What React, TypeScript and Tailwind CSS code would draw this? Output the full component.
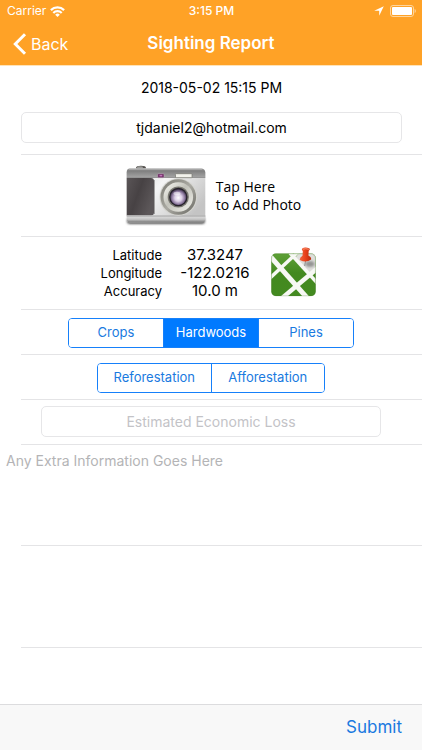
import { useState } from 'react'
import { clsx } from 'clsx'

interface SegmentedProps {
  label: string
  options: string[]
  value: string | null
  onChange: (value: string) => void
  className?: string
}

function Segmented({ label, options, value, onChange, className }: SegmentedProps) {
  return (
    <div
      role="group"
      aria-label={label}
      className={clsx(
        'mx-auto flex h-[30px] divide-x divide-[#1680fa] overflow-hidden rounded border border-[#1680fa]',
        className
      )}
    >
      {options.map((option) => (
        <button
          key={option}
          type="button"
          aria-pressed={value === option}
          onClick={() => onChange(option)}
          className={clsx(
            'flex-1 text-[13px]',
            value === option ? 'bg-[#007aff] text-white' : 'bg-white text-[#1a7ae0]'
          )}
        >
          {option}
        </button>
      ))}
    </div>
  )
}

function WifiIcon() {
  return (
    <svg width="15" height="11" viewBox="0 0 15 11" fill="none" stroke="white" strokeWidth="2.2" aria-hidden="true">
      <path d="M0.9 4.1a9.4 9.4 0 0 1 13.2 0" />
      <path d="M3.3 6.9a5.9 5.9 0 0 1 8.4 0" />
      <path d="M7.5 11 5.2 8.7a3.3 3.3 0 0 1 4.6 0z" fill="white" stroke="none" />
    </svg>
  )
}

function BatteryIcon() {
  return (
    <svg width="26" height="12" viewBox="0 0 26 12" aria-hidden="true">
      <rect x="0.5" y="0.5" width="23" height="11" rx="2.5" fill="none" stroke="#ffd59c" />
      <rect x="2" y="2" width="20" height="8" rx="1" fill="white" />
      <path d="M24.6 4v4c1.6-.6 1.6-3.4 0-4z" fill="#ffd59c" />
    </svg>
  )
}

function CameraIcon() {
  return (
    <svg width="84" height="62" viewBox="0 0 84 62" aria-hidden="true">
      <defs>
        <linearGradient id="cam-top" x1="0" y1="0" x2="0" y2="1">
          <stop offset="0" stopColor="#a5a5a5" />
          <stop offset="0.25" stopColor="#7f7f7f" />
          <stop offset="0.9" stopColor="#a2a2a2" />
          <stop offset="1" stopColor="#858585" />
        </linearGradient>
        <linearGradient id="cam-body" x1="0" y1="0" x2="1" y2="0.6">
          <stop offset="0" stopColor="#d2d2d2" />
          <stop offset="0.45" stopColor="#f5f5f5" />
          <stop offset="1" stopColor="#c4c4c4" />
        </linearGradient>
        <linearGradient id="cam-grip" x1="0" y1="0" x2="1" y2="0.5">
          <stop offset="0" stopColor="#5a5557" />
          <stop offset="0.5" stopColor="#474244" />
          <stop offset="1" stopColor="#5c5759" />
        </linearGradient>
        <linearGradient id="cam-base" x1="0" y1="0" x2="0" y2="1">
          <stop offset="0" stopColor="#e4e4e4" />
          <stop offset="0.55" stopColor="#c4c4c4" />
          <stop offset="1" stopColor="#777" />
        </linearGradient>
        <linearGradient id="cam-ring" x1="0" y1="0" x2="1" y2="1">
          <stop offset="0" stopColor="#77776f" />
          <stop offset="0.5" stopColor="#aaa9a2" />
          <stop offset="1" stopColor="#686862" />
        </linearGradient>
        <linearGradient id="cam-barrel" x1="0" y1="0" x2="1" y2="1">
          <stop offset="0" stopColor="#fafaf4" />
          <stop offset="0.45" stopColor="#c2c2ba" />
          <stop offset="1" stopColor="#f4f4ee" />
        </linearGradient>
        <radialGradient id="cam-glass" cx="0.5" cy="0.55" r="0.55">
          <stop offset="0" stopColor="#ffffff" />
          <stop offset="0.4" stopColor="#dccfe6" />
          <stop offset="0.75" stopColor="#88749a" />
          <stop offset="1" stopColor="#30283a" />
        </radialGradient>
        <filter id="cam-blur" x="-10%" y="-60%" width="120%" height="220%">
          <feGaussianBlur stdDeviation="1.2" />
        </filter>
      </defs>
      <rect x="3" y="53" width="78" height="6" rx="3" fill="#555" filter="url(#cam-blur)" />
      <ellipse cx="17" cy="3" rx="5" ry="2.2" fill="#55524f" />
      <ellipse cx="16" cy="2.2" rx="3.2" ry="0.9" fill="#9b9b98" />
      <path d="M6 3.5h71q4 0 4.3 4V54q0 3.5-4 3.5H6.5Q2.7 57.5 2.7 54V7.5Q2.7 3.5 6 3.5z" fill="url(#cam-body)" />
      <path d="M6 3.5h71q4 0 4.3 4V13H2.7V7.5Q2.7 3.5 6 3.5z" fill="url(#cam-top)" />
      <path d="M5 4h73" stroke="#c4c4c4" strokeWidth="0.8" />
      <path d="M2.7 13H27q3 0 3 3v31.5q0 3-3 3H2.7z" fill="url(#cam-grip)" />
      <path d="M2.7 50.5h78.6V54q0 3.5-4 3.5H6.5Q2.7 57.5 2.7 54z" fill="url(#cam-base)" />
      <path d="M2.7 51h78.6" stroke="#8f8f8f" strokeWidth="0.8" />
      <path d="M30.5 15v34" stroke="#8d8b8c" strokeWidth="0.8" />
      <rect x="33.7" y="8.7" width="6.3" height="4" rx="0.8" fill="#6d2c63" stroke="#b9a9b7" strokeWidth="0.6" />
      <rect x="35.5" y="9.8" width="2.8" height="1.6" fill="#c176bb" />
      <rect x="51.5" y="8.7" width="16.5" height="4" rx="0.6" fill="#f2f2ec" stroke="#75756f" strokeWidth="0.7" />
      <circle cx="54.3" cy="32" r="18.8" fill="#d5d5d0" />
      <circle cx="54.3" cy="32" r="17.8" fill="url(#cam-ring)" />
      <circle cx="54.3" cy="32" r="14.8" fill="url(#cam-barrel)" />
      <circle cx="54.3" cy="32" r="10.6" fill="#77766f" />
      <circle cx="54.3" cy="32" r="9.2" fill="#25202a" />
      <circle cx="54.3" cy="32" r="8" fill="url(#cam-glass)" />
      <ellipse cx="53" cy="28.5" rx="3.5" ry="1.8" fill="white" opacity="0.5" />
    </svg>
  )
}

function MapIcon() {
  return (
    <svg width="46" height="52" viewBox="0 0 46 52" aria-hidden="true">
      <defs>
        <linearGradient id="map-green" x1="0" y1="0" x2="0" y2="1">
          <stop offset="0" stopColor="#67a93e" />
          <stop offset="0.5" stopColor="#43891f" />
          <stop offset="1" stopColor="#438a20" />
        </linearGradient>
        <linearGradient id="map-pin" x1="0" y1="0" x2="1" y2="0">
          <stop offset="0" stopColor="#f0663c" />
          <stop offset="0.5" stopColor="#e8401a" />
          <stop offset="1" stopColor="#b92a0c" />
        </linearGradient>
        <filter id="map-blur" x="-50%" y="-50%" width="200%" height="200%">
          <feGaussianBlur stdDeviation="1.1" />
        </filter>
        <clipPath id="map-tile">
          <rect x="0.3" y="6.5" width="44.4" height="42.5" rx="4.5" />
        </clipPath>
      </defs>
      <g clipPath="url(#map-tile)">
        <rect width="46" height="52" fill="url(#map-green)" />
        <path d="M23 12 30 4h17v18l-9 6z" fill="#dededb" />
        <g stroke="#f7f8f4" fill="none">
          <path d="M-2 8 38 53" strokeWidth="5" />
          <path d="M19 6 48 38" strokeWidth="3.5" />
          <path d="M-2 32 28 4" strokeWidth="3.5" />
          <path d="M10 52 48 20" strokeWidth="4.5" />
        </g>
        <ellipse cx="39" cy="17" rx="4.5" ry="3" fill="#777" opacity="0.7" filter="url(#map-blur)" />
      </g>
      <rect x="0.6" y="6.8" width="43.8" height="42" rx="4.5" fill="none" stroke="#4d7b32" strokeOpacity="0.4" strokeWidth="0.7" />
      <path d="m34.5 14-.8 5" stroke="#8f8f8f" strokeWidth="1" />
      <path
        d="M31.2 1.4q3-1.8 7.3.1.9 1.2-.8 2.2l-.3 4.8q3.3 1.5 2.7 4-5 3.8-11.3.5-.3-2.6 2.7-4.2l.3-4.7q-1.5-1.4-.6-2.7z"
        fill="url(#map-pin)"
      />
      <path d="M31.8 2.2q3-1 6 .1" stroke="#ff9a78" strokeWidth="0.9" fill="none" />
    </svg>
  )
}

const readings = [
  { label: 'Latitude', value: '37.3247' },
  { label: 'Longitude', value: '-122.0216' },
  { label: 'Accuracy', value: '10.0 m' },
]

export default function App() {
  const [category, setCategory] = useState<string | null>('Hardwoods')
  const [planting, setPlanting] = useState<string | null>(null)

  return (
    <div className="flex min-h-screen flex-col bg-white font-['Inter',sans-serif] text-black">
      {/* Status bar and navigation */}
      <header className="border-b border-[#ffe3b8] bg-[#ffa226] text-white">
        <div className="grid h-[22px] grid-cols-[1fr_auto_1fr] items-center pr-1.5 pl-[7px] text-xs">
          <div className="flex items-center gap-1">
            <span>Carrier</span>
            <WifiIcon />
          </div>
          <span className="font-medium">3:15 PM</span>
          <div className="flex items-center justify-end gap-1.5">
            <svg width="10" height="10" viewBox="0 0 10 10" fill="white" aria-hidden="true">
              <path d="M9.8.2.2 4.8h5v5z" />
            </svg>
            <BatteryIcon />
          </div>
        </div>
        <div className="grid h-[43px] grid-cols-[1fr_auto_1fr] items-center">
          <a href="#" className="flex items-center gap-1 pl-[13px]">
            <svg width="14" height="22" viewBox="0 0 14 22" fill="none" stroke="white" strokeWidth="3" aria-hidden="true">
              <path d="M12 1.3 2.3 11 12 20.7" />
            </svg>
            <span className="text-base">Back</span>
          </a>
          <h1 className="text-[17px] font-semibold">Sighting Report</h1>
        </div>
      </header>

      <main className="flex flex-1 flex-col">
        <form id="sighting" className="flex flex-1 flex-col" onSubmit={(e) => e.preventDefault()}>
          <div className="ml-[21px] border-b border-[#e4e4e6] pt-3 pr-5 pb-[11px]">
            <p className="pb-3.5 text-center text-sm">2018-05-02 15:15 PM</p>
            <input
              type="email"
              aria-label="Email"
              defaultValue="tjdaniel2@hotmail.com"
              className="block h-[31px] w-full rounded-[5px] border border-[#e6e6e8] text-center text-sm outline-none"
            />
          </div>

          <div className="ml-[21px] border-b border-[#e4e4e6] pr-[18px]">
            <button type="button" className="mx-auto flex h-[81px] items-center gap-2 text-left">
              <CameraIcon />
              <span className="font-['Open_Sans',sans-serif] text-sm leading-[18px]">
                Tap Here
                <br />
                to Add Photo
              </span>
            </button>
          </div>

          <div className="ml-[21px] flex h-[73px] items-center border-b border-[#e4e4e6] pl-[79px]">
            <dl className="grid grid-cols-[62px_82px] gap-x-3 leading-[18px]">
              {readings.map(({ label, value }) => (
                <div key={label} className="contents">
                  <dt className="text-right text-[13px]">{label}</dt>
                  <dd className="text-center text-[15px]">{value}</dd>
                </div>
              ))}
            </dl>
            <button type="button" aria-label="Show on map" className="ml-[15px]">
              <MapIcon />
            </button>
          </div>

          <div className="ml-[21px] border-b border-[#e4e4e6] pt-2 pr-[21px] pb-1.5">
            <Segmented
              label="Category"
              options={['Crops', 'Hardwoods', 'Pines']}
              value={category}
              onChange={setCategory}
              className="w-[286px]"
            />
          </div>
          <div className="ml-[21px] border-b border-[#e4e4e6] pt-2 pr-[21px] pb-1.5">
            <Segmented
              label="Planting"
              options={['Reforestation', 'Afforestation']}
              value={planting}
              onChange={setPlanting}
              className="w-[228px]"
            />
          </div>

          <div className="ml-[21px] border-b border-[#e4e4e6] pt-1.5 pr-[41px] pb-[7px] pl-5">
            <input
              type="text"
              aria-label="Estimated Economic Loss"
              placeholder="Estimated Economic Loss"
              className="block h-[31px] w-full rounded-[5px] border border-[#e6e6e8] text-center text-sm outline-none placeholder:text-[#c3c3c7]"
            />
          </div>

          <textarea
            aria-label="Extra information"
            placeholder="Any Extra Information Goes Here"
            className="block h-[100px] w-full resize-none px-1.5 pt-1.5 text-sm outline-none placeholder:text-[#b4b4b6]"
          />
          <hr className="ml-[21px] border-[#e4e4e6]" />
          <div className="ml-[21px] h-[102px] border-b border-[#e4e4e6]" />
        </form>
      </main>

      <footer className="flex h-[46px] items-center justify-end border-t border-[#dcdcde] bg-[#f8f8f8] pr-5">
        <button type="submit" form="sighting" className="text-[17px] text-[#1a7ae0]">
          Submit
        </button>
      </footer>
    </div>
  )
}
